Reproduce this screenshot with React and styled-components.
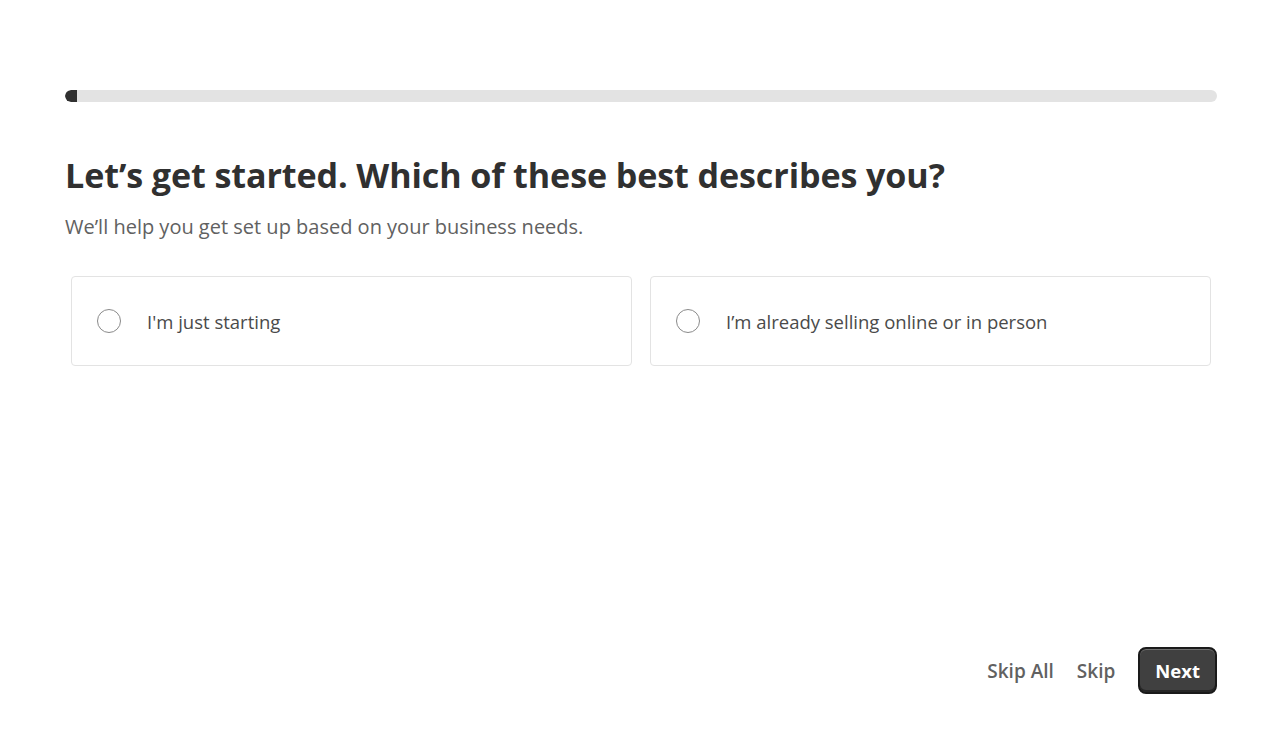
import styled, { createGlobalStyle } from 'styled-components';

const GlobalStyle = createGlobalStyle`
  html, body {
    margin: 0;
    padding: 0;
    background: #ffffff;
    font-family: "Open Sans", "Noto Sans", sans-serif;
  }
`;

const options = [
  { id: 'starting', label: "I'm just starting" },
  { id: 'selling', label: 'I’m already selling online or in person' },
];

function App() {
  return (
    <>
      <GlobalStyle />
      <Page>
        <Progress>
          <ProgressFill style={{ width: '1%' }} />
        </Progress>
        <Title>Let’s get started. Which of these best describes you?</Title>
        <Subtitle>We’ll help you get set up based on your business needs.</Subtitle>
        <Options>
          {options.map((o) => (
            <Card key={o.id}>
              <Radio />
              <CardLabel>{o.label}</CardLabel>
            </Card>
          ))}
        </Options>
        <Footer>
          <TextButton>Skip All</TextButton>
          <TextButton>Skip</TextButton>
          <NextButton>Next</NextButton>
        </Footer>
      </Page>
    </>
  );
}

export default App;

const Page = styled.div`
  width: 1152px;
  height: 747px;
  box-sizing: border-box;
  margin-left: 65px;
  padding-top: 90px;
  display: flex;
  flex-direction: column;
`;

const Progress = styled.div`
  width: 100%;
  height: 12px;
  border-radius: 6px;
  background: #e3e3e3;
  overflow: hidden;
`;

const ProgressFill = styled.div`
  height: 100%;
  min-width: 12px;
  background: #303030;
  border-radius: 6px 0 0 6px;
`;

const Title = styled.h1`
  margin: 51px 0 0;
  font-size: 34.1px;
  line-height: 44px;
  font-weight: 700;
  color: #303030;
  letter-spacing: -0.1px;
`;

const Subtitle = styled.p`
  margin: 16px 0 0;
  font-size: 20px;
  line-height: 28px;
  color: #616161;
`;

const Options = styled.div`
  display: grid;
  grid-template-columns: 1fr 1fr;
  gap: 18px;
  margin: 35px 6px 0;
`;

const Card = styled.div`
  height: 90px;
  box-sizing: border-box;
  border: 1px solid #e3e3e3;
  border-radius: 4px;
  display: flex;
  align-items: center;
  padding-left: 25px;
  gap: 26px;
  cursor: pointer;
`;

const Radio = styled.span`
  width: 24px;
  height: 24px;
  box-sizing: border-box;
  border: 1px solid #8a8a8a;
  border-radius: 50%;
  flex-shrink: 0;
`;

const CardLabel = styled.span`
  font-size: 18.5px;
  color: #4a4a4a;
`;

const Footer = styled.div`
  margin-top: auto;
  margin-bottom: 53px;
  display: flex;
  justify-content: flex-end;
  align-items: center;
  gap: 23px;
`;

const TextButton = styled.button`
  background: none;
  border: none;
  padding: 0;
  font-family: inherit;
  font-size: 19px;
  font-weight: 600;
  color: #616161;
  cursor: pointer;
`;

const NextButton = styled.button`
  height: 47px;
  padding: 0 15px;
  border-radius: 8px;
  border: 2px solid #1a1a1a;
  background: #404040;
  box-shadow: inset 0 1px 0 rgba(255, 255, 255, 0.25), inset 0 -2px 0 rgba(0, 0, 0, 0.4);
  color: #ffffff;
  font-family: inherit;
  font-size: 18.5px;
  font-weight: 700;
  cursor: pointer;
`;
